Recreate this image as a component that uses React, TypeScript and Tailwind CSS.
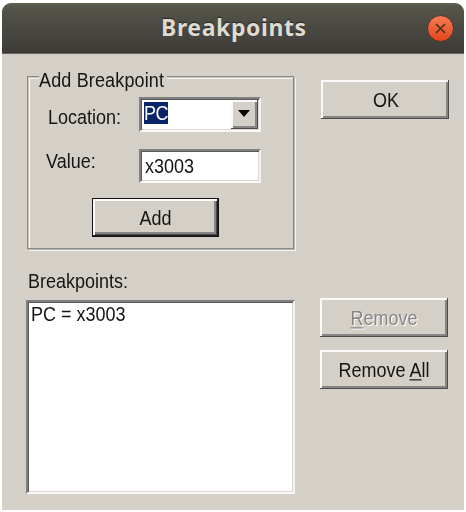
import type { ReactNode } from "react";

const sunken =
  "border-2 border-t-[#808080] border-l-[#808080] border-r-[#f5f3f0] border-b-[#fbfaf8] bg-white shadow-[inset_1px_1px_0_#585858,inset_-1px_-1px_0_#dcd8d1]";
const raised =
  "bg-[#d4d0c8] shadow-[inset_-1px_-1px_0_#4c4c4c,inset_2px_2px_0_#fafafa,inset_-3px_-3px_0_#858585]";

function Label({ children, className = "" }: { children: ReactNode; className?: string }) {
  return (
    <span className={`inline-block h-[22px] shrink-0 origin-center scale-y-[1.16] whitespace-nowrap text-[18px] leading-[22px] ${className}`}>
      {children}
    </span>
  );
}

function Button({ children, className = "" }: { children: ReactNode; className?: string }) {
  return (
    <button className={`flex h-[39px] w-[128px] items-center justify-center ${raised} ${className}`}>
      {children}
    </button>
  );
}

export default function App() {
  return (
    <div className="h-[512px] w-[466px] overflow-hidden bg-white pt-[3px] pl-[2px] font-['Liberation_Sans',Arial,sans-serif] text-[#151515]">
      <div className="flex h-[507px] w-[462px] flex-col overflow-hidden rounded-t-[9px] bg-[#d4d0c8]">
        <header className="flex h-[51px] shrink-0 items-center border-t-2 border-b border-t-[#605e51] border-b-[#686660] bg-linear-to-b from-[#57564c] to-[#3c3b37]">
          <h1 className="ml-[159px] w-[254px] pb-[4px] font-['Noto_Sans',sans-serif] text-[23px] leading-[30px] font-bold tracking-[0.6px] text-[#dfdbd2] [text-shadow:0_-1px_1px_#24231f]">
            Breakpoints
          </h1>
          <button aria-label="Close" className="mb-[2px] ml-[12px] h-[27px] w-[27px]">
            <svg viewBox="0 0 27 27" className="h-full w-full">
              <defs>
                <linearGradient id="closeFill" x1="0" y1="0" x2="0" y2="1">
                  <stop offset="0" stopColor="#f67b54" />
                  <stop offset="1" stopColor="#e2451b" />
                </linearGradient>
              </defs>
              <circle cx="13.5" cy="13.5" r="13" fill="url(#closeFill)" stroke="#4d3027" strokeWidth="1" />
              <path d="M9 9 18 18M18 9 9 18" stroke="#4c3019" strokeWidth="1.7" />
            </svg>
          </button>
        </header>

        <main className="flex pt-[15px] pl-[24px]">
          <section className="w-[269px] shrink-0">
            <div className="grid">
              <div className="col-start-1 row-start-1 mt-[7px] ml-px h-[173px] w-[267px] border border-[#8a8a8a] shadow-[1px_1px_0_#b5b3af,2px_2px_0_#f6f5f2,inset_1px_1px_0_#c9c6c0,inset_2px_2px_0_#f6f5f2]" />
              <div className="z-10 col-start-1 row-start-1">
                <div className="ml-[13px] flex h-[22px] w-[128px] bg-[#d4d0c8]">
                  <Label className="tracking-[0.15px]">Add Breakpoint</Label>
                </div>
                <div className="mt-[6px] ml-[22px] flex h-[35px]">
                  <Label className="mt-[9px] w-[91px]">Location:</Label>
                  <div className={`flex h-[35px] w-[122px] justify-between ${sunken}`}>
                    <span className="mt-[3px] ml-[3px] flex h-[22px] w-[24px] bg-[#0a246a] text-white">
                      <Label className="leading-[20px] tracking-[-0.5px]">PC</Label>
                    </span>
                    <button className={`mt-px mr-px flex h-[29px] w-[27px] items-center justify-center pr-[2px] pb-[2px] ${raised}`}>
                      <svg width="12" height="7" viewBox="0 0 12 7">
                        <path d="M0 0H12L6 7Z" fill="#080808" />
                      </svg>
                    </button>
                  </div>
                </div>
                <div className="mt-[17px] ml-[20px] flex h-[34px]">
                  <Label className="mt-px w-[93px]">Value:</Label>
                  <div className={`flex h-[34px] w-[122px] pt-[4px] pl-[4px] ${sunken}`}>
                    <Label>x3003</Label>
                  </div>
                </div>
                <button className="mt-[15px] ml-[66px] flex h-[39px] w-[127px] items-center justify-center bg-[#d4d0c8] shadow-[inset_0_0_0_1px_#111,inset_-2px_-2px_0_#222,inset_3px_3px_0_#fafafa,inset_-3px_-3px_0_#444,inset_-5px_-5px_0_#858585]">
                  <Label>Add</Label>
                </button>
              </div>
            </div>
            <div className="mt-[21px] ml-[2px] flex h-[22px]">
              <Label>Breakpoints:</Label>
            </div>
            <div className={`mt-[8px] flex h-[194px] w-[269px] pt-px pl-[3px] ${sunken}`}>
              <Label>PC = x3003</Label>
            </div>
          </section>

          <aside className="pt-[11px] pl-[25px]">
            <Button className="ml-px pl-[2px]"><Label>OK</Label></Button>
            <Button className="mt-[179px] text-[#858585] [text-shadow:1px_1px_0_#fff]">
              <Label><u className="decoration-1 underline-offset-2">R</u>emove</Label>
            </Button>
            <Button className="mt-[13px]">
              <Label>Remove <u className="decoration-1 underline-offset-2">A</u>ll</Label>
            </Button>
          </aside>
        </main>
      </div>
    </div>
  );
}
